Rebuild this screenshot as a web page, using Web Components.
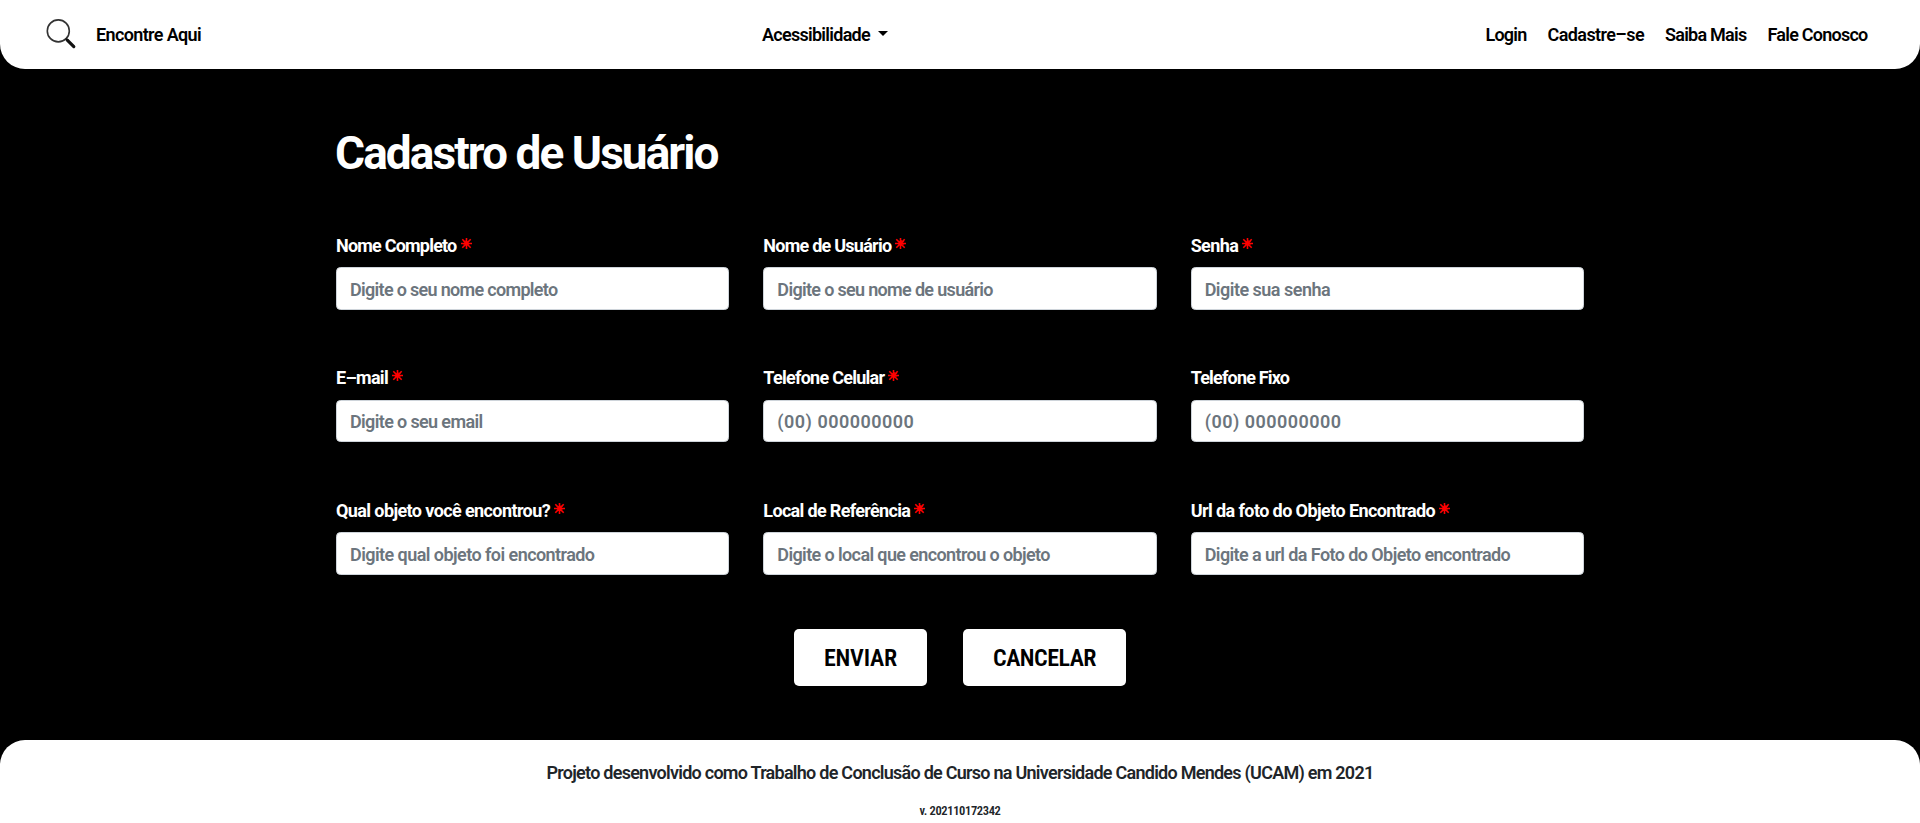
<!DOCTYPE html>
<html lang="pt-BR">
<head>
<meta charset="utf-8">
<title>Encontre Aqui - Cadastro de Usuário</title>
<style>
html,body{margin:0;height:100%;background:#000}
body{font:700 18px/24px Roboto,"Liberation Sans",sans-serif;overflow:hidden}
</style>
</head>
<body>
<cadastro-page></cadastro-page>
<script>
const shadow=(el,html)=>{const r=el.attachShadow({mode:'open'});r.innerHTML=html;return r};

// Letter spacing that sets a run of text to the given advance width.
const tracking=(text,width,style)=>{
  const p=document.createElement('span');
  p.textContent=text;
  p.style.cssText='position:absolute;white-space:nowrap;letter-spacing:0;'+style;
  document.body.append(p);
  const n=p.getBoundingClientRect().width;
  p.remove();
  return (width-n)/text.length;
};

class FitText extends HTMLElement{
  connectedCallback(){
    if(this.shadowRoot)return;
    shadow(this,'<style>:host{display:inline-block;white-space:nowrap}</style><slot></slot>');
    const s=getComputedStyle(this);
    this.style.letterSpacing=tracking(this.textContent,+this.getAttribute('w'),`font-weight:${s.fontWeight};font-size:${s.fontSize};font-stretch:${s.fontStretch}`)+'px';
  }
}
customElements.define('fit-text',FitText);

class SiteHeader extends HTMLElement{
  connectedCallback(){
    shadow(this,`<style>
    :host{box-sizing:border-box;display:grid;grid-template-columns:717px 1fr auto;align-items:center;height:69px;padding:1px 52.5px 0 45px;background:#fff;border-radius:0 0 25px 25px;color:#000;font-weight:600}
    .brand{display:flex;align-items:center;gap:19px}
    .brand svg{margin-top:-3px}
    .menu{display:flex;align-items:center;gap:8px}
    .caret{border:5.5px solid transparent;border-top:5.5px solid #000;border-bottom:0;margin-top:-3px}
    nav{display:flex;gap:21px}
    </style>
    <div class="brand"><svg width="32" height="32" viewBox="0 0 32 32" fill="none"><circle cx="13.3" cy="12.9" r="11" stroke="#333" stroke-width="1.6"/><path d="m20.7 20.4 2.3 2.3" stroke="#222" stroke-width="1.8"/><path d="m22.3 22.1 6.5 6.5" stroke="#111" stroke-width="3.2" stroke-linecap="round"/></svg><fit-text w="105">Encontre Aqui</fit-text></div>
    <div class="menu"><fit-text w="108">Acessibilidade</fit-text><span class="caret"></span></div>
    <nav><fit-text w="41">Login</fit-text><fit-text w="96.5">Cadastre–se</fit-text><fit-text w="81.5">Saiba Mais</fit-text><fit-text w="100">Fale Conosco</fit-text></nav>`);
  }
}
customElements.define('site-header',SiteHeader);

class FormField extends HTMLElement{
  connectedCallback(){
    const g=n=>this.getAttribute(n);
    const r=shadow(this,`<style>
    :host{display:block;color:#fff}
    label{box-sizing:border-box;display:flex;height:33.5px;padding-top:.3px;line-height:24px;gap:4px}
    .req{display:grid;place-items:center;width:11px;height:11px;margin-top:4px;color:#f00;font:700 12px/11px "DejaVu Sans",sans-serif}
    .req>*{grid-area:1/1}
    .req span{height:11px;line-height:15px}
    input{box-sizing:border-box;display:block;width:100%;height:42.5px;margin:0;padding:2.5px 13px 0;border:1px solid #ced4da;border-radius:4.5px;background:#fff;font:inherit;font-weight:600;color:#212529;outline:0}
    :host([contact]) input{padding-bottom:1px}
    input::placeholder{color:#6c757d;opacity:1;letter-spacing:var(--track)}
    </style><label for="i"><fit-text w="${g('lw')}">${g('label')}</fit-text>${this.hasAttribute('required')?'<span class="req"><span>*</span><svg width="11" height="11" viewBox="0 0 11 11" stroke="red" stroke-width="1.6"><path d="M5.5 0v11M0 5.5h11M1.3 1.3l8.4 8.4M9.7 1.3l-8.4 8.4"/></svg></span>':''}</label><input id="i" placeholder="${g('hint')}">`);
    r.querySelector('input').style.setProperty('--track',tracking(g('hint'),+g('hw'),'font-weight:600')+'px');
  }
}
customElements.define('form-field',FormField);

class ActionButton extends HTMLElement{
  connectedCallback(){
    shadow(this,`<style>:host{display:block;font-size:24px;line-height:32px;font-weight:600;font-stretch:87.5%}button{height:57px;padding:1px 30px 0;border:0;border-radius:5px;background:#fff;color:#000;font:inherit;display:block}</style><button><slot></slot></button>`);
  }
}
customElements.define('action-button',ActionButton);

class SiteFooter extends HTMLElement{
  connectedCallback(){
    shadow(this,`<style>
    :host{box-sizing:border-box;display:flex;flex-direction:column;align-items:center;height:83px;padding-top:21px;background:#fff;border-radius:25px 25px 0 0;color:#212529;font-weight:600}
    .v{font-size:12.5px;line-height:16px;margin-top:18px;font-stretch:87.5%}
    </style><fit-text w="827">Projeto desenvolvido como Trabalho de Conclusão de Curso na Universidade Candido Mendes (UCAM) em 2021</fit-text><fit-text class="v" w="81">v. 202110172342</fit-text>`);
  }
}
customElements.define('site-footer',SiteFooter);

class CadastroPage extends HTMLElement{
  connectedCallback(){
    shadow(this,`<style>
    :host{display:flex;flex-direction:column;height:823px;background:#000}
    main{flex:1;width:1248px;margin:0 auto;color:#fff}
    h1{margin:55.5px 0 0;height:109.2px;font-size:46px;line-height:56px;font-weight:700}
    h1 fit-text{margin-left:-1px}
    .grid{display:grid;grid-template-columns:repeat(3,1fr);gap:56.5px 34px}
    .actions{display:flex;justify-content:center;gap:36px;margin-top:54.3px}
    </style>
    <site-header></site-header>
    <main>
      <h1><fit-text w="382.5">Cadastro de Usuário</fit-text></h1>
      <div class="grid">
        <form-field required label="Nome Completo" lw="120.5" hint="Digite o seu nome completo" hw="207.5"></form-field>
        <form-field required label="Nome de Usuário" lw="128" hint="Digite o seu nome de usuário" hw="215.5"></form-field>
        <form-field required label="Senha" lw="47.5" hint="Digite sua senha" hw="125.5"></form-field>
        <form-field required contact label="E–mail" lw="52" hint="Digite o seu email" hw="132.5"></form-field>
        <form-field required contact label="Telefone Celular" lw="121" hint="(00) 000000000" hw="137"></form-field>
        <form-field contact label="Telefone Fixo" lw="98.5" hint="(00) 000000000" hw="137"></form-field>
        <form-field required label="Qual objeto você encontrou?" lw="214" hint="Digite qual objeto foi encontrado" hw="244.5"></form-field>
        <form-field required label="Local de Referência" lw="147" hint="Digite o local que encontrou o objeto" hw="272.5"></form-field>
        <form-field required label="Url da foto do Objeto Encontrado" lw="244.5" hint="Digite a url da Foto do Objeto encontrado" hw="305.5"></form-field>
      </div>
      <div class="actions"><action-button><fit-text w="73">ENVIAR</fit-text></action-button><action-button><fit-text w="103">CANCELAR</fit-text></action-button></div>
    </main>
    <site-footer></site-footer>`);
  }
}
customElements.define('cadastro-page',CadastroPage);
</script>
</body>
</html>
